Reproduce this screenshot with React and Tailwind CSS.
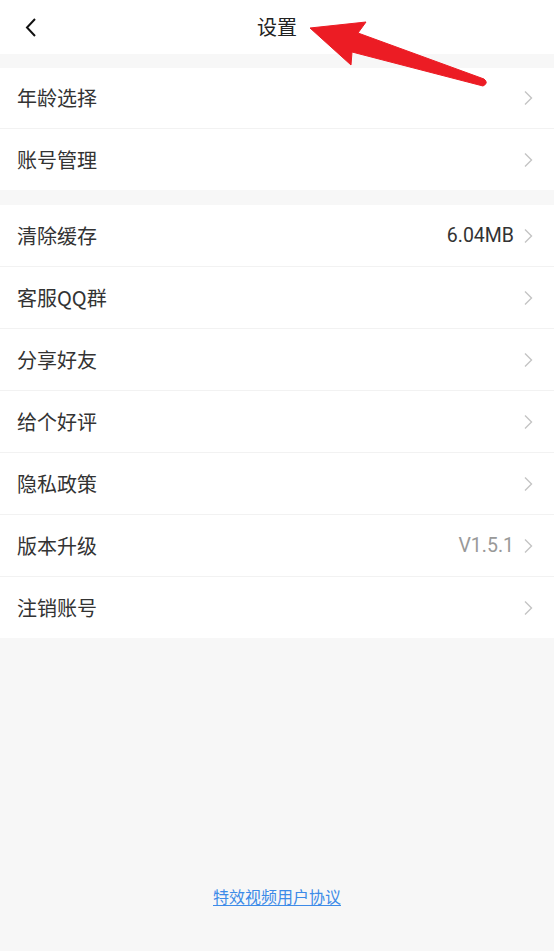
import React from 'react';

const font = { fontFamily: '"Noto Sans CJK SC", "Noto Sans", sans-serif' };

const Chevron = () => (
  <svg width="10" height="16" viewBox="0 0 10 16" className="ml-[9px]">
    <path d="M2 1.5 L8.5 8 L2 14.5" fill="none" stroke="#c4c4c4" strokeWidth="1.4" />
  </svg>
);

const Row = ({ label, value, valueClass = 'text-[#333]', last, height = 'h-[62px]' }) => (
  <div className={`flex ${height} items-center justify-between pl-[17px] pr-[21px] ${last ? '' : 'border-b border-[#f2f2f2]'}`}>
    <span className="text-[20px] text-[#333]">{label}</span>
    <div className="flex items-center">
      {value ? <span className={`text-[19.5px] ${valueClass}`} style={{ fontFamily: 'Roboto, sans-serif' }}>{value}</span> : null}
      <Chevron />
    </div>
  </div>
);

const App = () => {
  const groupOne = ['年龄选择', '账号管理'];
  const groupTwo = [
    { label: '清除缓存', value: '6.04MB' },
    { label: '客服QQ群' },
    { label: '分享好友' },
    { label: '给个好评' },
    { label: '隐私政策' },
    { label: '版本升级', value: 'V1.5.1', valueClass: 'text-[#999]' },
    { label: '注销账号' },
  ];

  return (
    <div className="relative flex min-h-[951px] w-full flex-col bg-[#f7f7f7]" style={font}>
      <div className="relative flex h-[54px] items-center justify-center bg-white">
        <svg width="14" height="22" viewBox="0 0 14 22" className="absolute left-[24px] top-[17px]">
          <path d="M11 2 L3 10.5 L11 19" fill="none" stroke="#111" strokeWidth="2" />
        </svg>
        <span className="text-[20px] text-[#222]">设置</span>
      </div>

      <div className="mt-[14px] bg-white">
        {groupOne.map((label, i) => (
          <Row key={label} label={label} height="h-[61px]" last={i === groupOne.length - 1} />
        ))}
      </div>

      <div className="mt-[15px] bg-white">
        {groupTwo.map((item, i) => (
          <Row
            key={item.label}
            {...item}
            height={i === groupTwo.length - 1 ? 'h-[61px]' : 'h-[62px]'}
            last={i === groupTwo.length - 1}
          />
        ))}
      </div>

      <div className="flex flex-1 items-end justify-center pb-[43px]">
        <a href="#" className="text-[16px] text-[#3d8be8] underline underline-offset-2">特效视频用户协议</a>
      </div>

      {/* red annotation arrow */}
      <svg className="pointer-events-none absolute left-0 top-0" width="554" height="100" viewBox="0 0 554 100">
        <path
          d="M310 28 L366 22 L358 33 L484 79 Q489 83 483 86 L352 52 L351 65 Z"
          fill="#ec1c24"
          stroke="#ec1c24"
          strokeWidth="1"
          strokeLinejoin="round"
        />
      </svg>
    </div>
  );
};

export default App;
